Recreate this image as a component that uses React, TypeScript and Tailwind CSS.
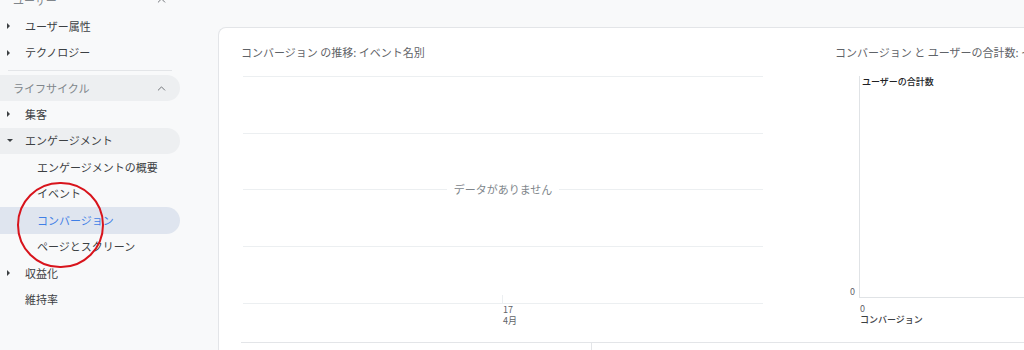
import React from "react";
import { ChevronUp } from "lucide-react";

// Sidebar nav entries
type NavItem = {
  label: string;
  level: 1 | 2;
  arrow?: "right" | "down";
  active?: boolean;
  open?: boolean;
};

const topItems: NavItem[] = [
  { label: "ユーザー属性", level: 1, arrow: "right" },
  { label: "テクノロジー", level: 1, arrow: "right" },
];

const lifecycleItems: NavItem[] = [
  { label: "集客", level: 1, arrow: "right" },
  { label: "エンゲージメント", level: 1, arrow: "down", open: true },
  { label: "エンゲージメントの概要", level: 2 },
  { label: "イベント", level: 2 },
  { label: "コンバージョン", level: 2, active: true },
  { label: "ページとスクリーン", level: 2 },
  { label: "収益化", level: 1, arrow: "right" },
  { label: "維持率", level: 1 },
];

const Arrow = ({ dir }: { dir: "right" | "down" }) =>
  dir === "right" ? (
    <span className="w-0 h-0 border-y-[3px] border-y-transparent border-l-[3.5px] border-l-[#3c4043]" />
  ) : (
    <span className="w-0 h-0 border-x-[3px] border-x-transparent border-t-[3.5px] border-t-[#3c4043]" />
  );

const NavRow = ({ item }: { item: NavItem }) => {
  const bg = item.active
    ? "bg-[#dfe5ef] text-[#3f7fe6]"
    : item.open
    ? "bg-[#edeff1] text-[#3c4043]"
    : "text-[#3c4043]";
  return (
    <div
      className={`relative flex h-[26.5px] w-[180px] items-center rounded-r-full ${bg}`}
    >
      <div className="flex w-[25px] shrink-0 items-center pl-[7px]">
        {item.arrow && <Arrow dir={item.arrow} />}
      </div>
      <span className={item.level === 2 ? "pl-[12px]" : ""}>{item.label}</span>
    </div>
  );
};

const SectionHeader = ({ label, filled }: { label: string; filled?: boolean }) => (
  <div
    className={`flex h-[26px] w-[180px] items-center justify-between rounded-r-full pl-[13px] pr-[12px] text-[#80868b] ${
      filled ? "bg-[#edeff1]" : ""
    }`}
  >
    <span>{label}</span>
    <ChevronUp size={13} strokeWidth={1.6} className="text-[#5f6368]" />
  </div>
);

const Sidebar = () => (
  <aside className="relative w-[218px] shrink-0 text-[11px] leading-none">
    <div className="-mt-[13px]">
      <SectionHeader label="ユーザー" />
    </div>
    {topItems.map((it) => (
      <NavRow key={it.label} item={it} />
    ))}
    <div className="flex h-[9px] items-center pl-[8px]">
      <div className="h-px w-[164px] bg-[#e3e5e8]" />
    </div>
    <SectionHeader label="ライフサイクル" filled />
    {lifecycleItems.map((it) => (
      <NavRow key={it.label} item={it} />
    ))}
    {/* red annotation circle */}
    <div className="pointer-events-none absolute left-[17px] top-[182px] h-[86px] w-[87px] rounded-full border-[2.5px] border-[#d8141c]" />
  </aside>
);

const GridLine = () => <div className="ml-[2px] h-px bg-[#eceff1]" />;

const TrendChart = () => (
  <div className="w-[522px] shrink-0">
    <div className="pt-[17px] text-[11px] leading-[14px] text-[#5f6368]">
      コンバージョン の推移: イベント名別
    </div>
    <div className="mt-[17px]">
      <GridLine />
      <div className="h-[56px]" />
      <GridLine />
      <div className="h-[49px]" />
      <div className="ml-[2px] flex h-[13px] items-center">
        <div className="h-px flex-1 bg-[#eceff1]" />
        <span className="px-[7px] text-[11px] text-[#80868b]">データがありません</span>
        <div className="h-px flex-1 bg-[#eceff1]" />
      </div>
      <div className="h-[50px]" />
      <GridLine />
      <div className="h-[48px]" />
      <div className="ml-[261px] h-[8px] w-px bg-[#eceff1]" />
      <GridLine />
      <div className="pl-[262px] text-[9px] leading-[11px] text-[#5f6368]">
        <div>17</div>
        <div>4月</div>
      </div>
    </div>
  </div>
);

const TotalsChart = () => (
  <div className="min-w-0 flex-1">
    <div className="whitespace-nowrap pt-[17px] text-[11px] leading-[14px] text-[#5f6368]">
      コンバージョン と ユーザーの合計数: イベント名別
    </div>
    <div className="mt-[17px] flex">
      <div className="flex w-[24px] shrink-0 items-end justify-end pb-[1px] pr-[4px] text-[9px] leading-[10px] text-[#5f6368]">
        0
      </div>
      <div className="h-[222px] flex-1 border-b border-l border-[#e0e3e6] pl-[2px] pt-[1px] text-[9px] font-medium leading-[10px] text-[#202124]">
        ユーザーの合計数
      </div>
    </div>
    <div className="pl-[25px] pt-[5px] text-[9px] leading-[11px] text-[#5f6368]">
      <div>0</div>
      <div className="font-medium text-[#3c4043]">コンバージョン</div>
    </div>
  </div>
);

export default function App() {
  return (
    <div
      className="flex h-[350px] w-[1024px] overflow-hidden bg-[#f8f9fa]"
      style={{ fontFamily: '"Noto Sans CJK JP", "Noto Sans", sans-serif' }}
    >
      <Sidebar />
      <main className="min-w-0 flex-1 pt-[27px]">
        <div className="h-[340px] w-[830px] rounded-tl-lg border border-r-0 border-[#e3e5e8] bg-white pl-[22px]">
          <div className="flex gap-[72px]">
            <TrendChart />
            <TotalsChart />
          </div>
          <div className="mt-[16px] flex h-[20px] border-t border-[#e3e5e8]">
            <div className="w-[351px] border-r border-[#e3e5e8]" />
            <div className="flex-1" />
          </div>
        </div>
      </main>
    </div>
  );
}
